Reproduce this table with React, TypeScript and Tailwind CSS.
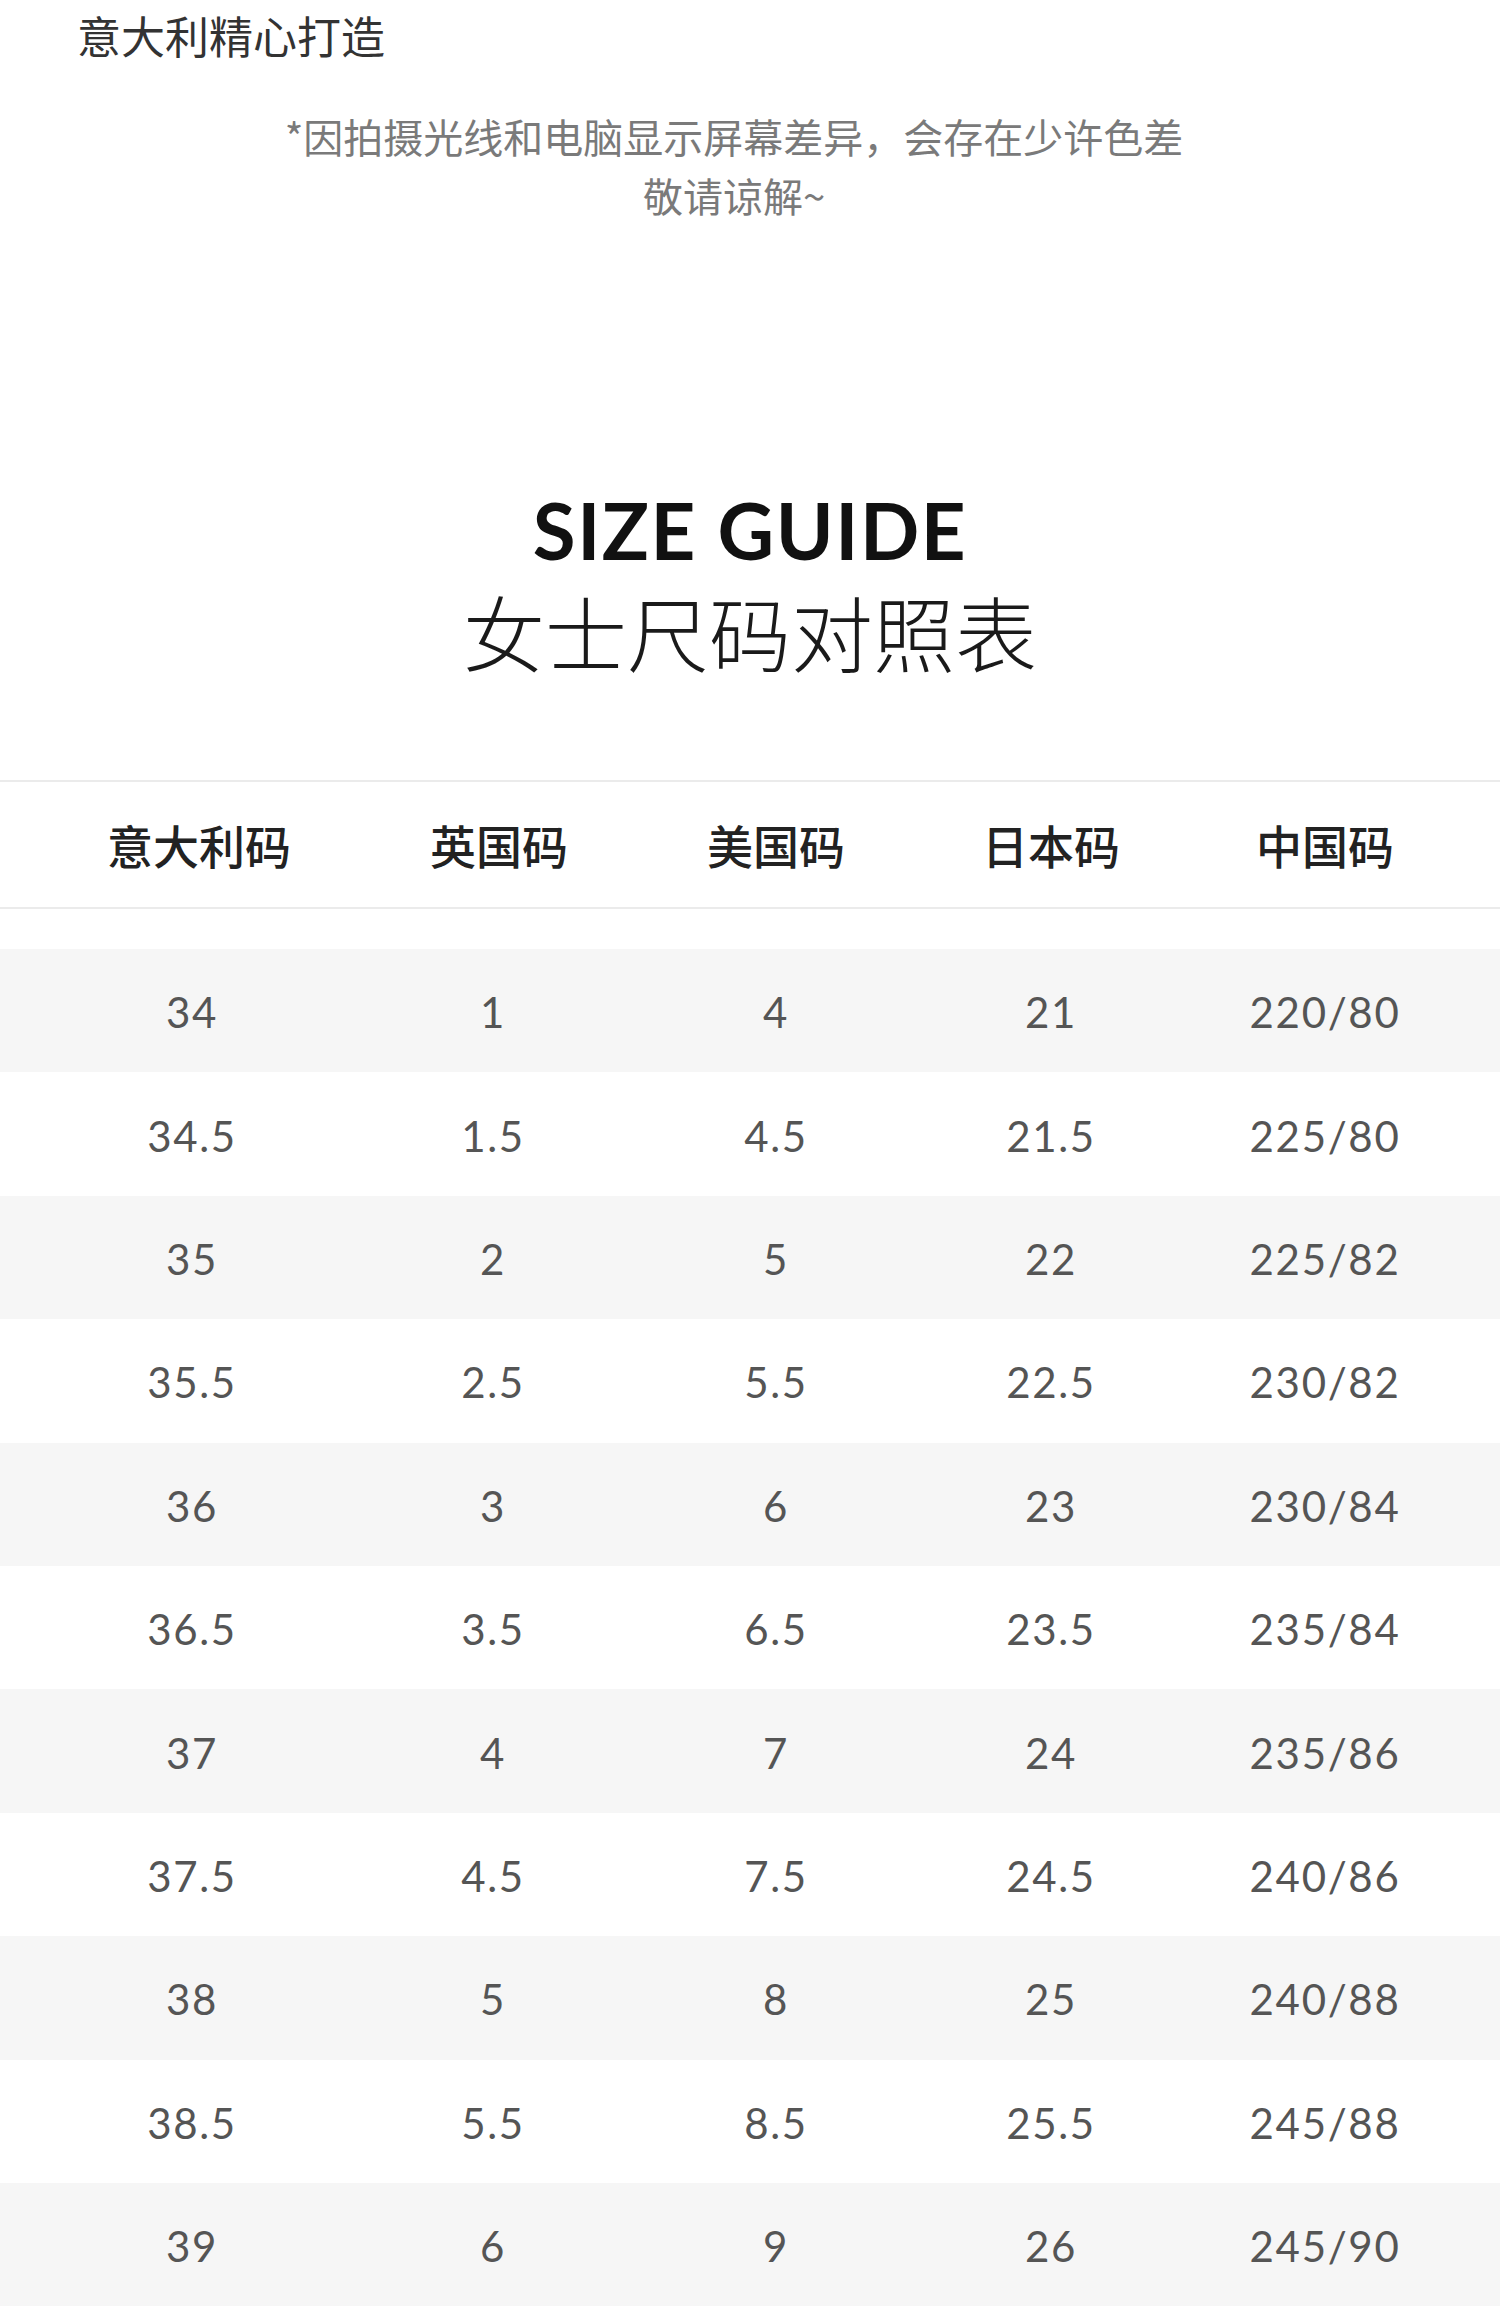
import React from 'react';

type Row = { it: string; uk: string; us: string; jp: string; cn: string };

const rows: Row[] = [
  { it: '34', uk: '1', us: '4', jp: '21', cn: '220/80' },
  { it: '34.5', uk: '1.5', us: '4.5', jp: '21.5', cn: '225/80' },
  { it: '35', uk: '2', us: '5', jp: '22', cn: '225/82' },
  { it: '35.5', uk: '2.5', us: '5.5', jp: '22.5', cn: '230/82' },
  { it: '36', uk: '3', us: '6', jp: '23', cn: '230/84' },
  { it: '36.5', uk: '3.5', us: '6.5', jp: '23.5', cn: '235/84' },
  { it: '37', uk: '4', us: '7', jp: '24', cn: '235/86' },
  { it: '37.5', uk: '4.5', us: '7.5', jp: '24.5', cn: '240/86' },
  { it: '38', uk: '5', us: '8', jp: '25', cn: '240/88' },
  { it: '38.5', uk: '5.5', us: '8.5', jp: '25.5', cn: '245/88' },
  { it: '39', uk: '6', us: '9', jp: '26', cn: '245/90' },
];

// the first two headings sit a little right of their column values
const headers = [
  { label: '意大利码', nudge: 'pl-[14px]' },
  { label: '英国码', nudge: 'pl-[12px]' },
  { label: '美国码', nudge: '' },
  { label: '日本码', nudge: '' },
  { label: '中国码', nudge: '' },
];

const cjk = "font-['Noto_Sans_CJK_SC','Noto_Sans',sans-serif]";
const cols = 'grid grid-cols-[300px_302px_264px_286px_1fr] pl-[42px] pr-[44px]';

export default function App() {
  return (
    <div className={`w-[1500px] min-h-[2322px] bg-white ${cjk}`}>
      <p className="pt-[11px] pl-[77px] text-[44px] leading-[48px] text-[#333]">意大利精心打造</p>

      <div className="mt-[48px] pr-[32px] text-center text-[40px] leading-[59px] text-[#7a7a7a]">
        <p>*因拍摄光线和电脑显示屏幕差异，会存在少许色差</p>
        <p>敬请谅解~</p>
      </div>

      <h1 className="mt-[260px] text-center font-['Lato',sans-serif] text-[78px] font-bold leading-[90px] tracking-[0.02em] text-[#111]">
        SIZE GUIDE
      </h1>
      <h2 className="mt-[8px] text-center text-[82px] font-light leading-[96px] text-[#1a1a1a]">
        女士尺码对照表
      </h2>

      <div className="mt-[101px]">
        <div className={`${cols} h-[129px] items-center border-y-2 border-[#ebebeb]`}>
          {headers.map((h) => (
            <div key={h.label} className={`pb-[1px] text-center text-[46px] font-medium text-[#222] ${h.nudge}`}>
              {h.label}
            </div>
          ))}
        </div>

        <div className="mt-[40px]">
          {rows.map((r, i) => (
            <div
              key={r.it}
              className={`${cols} h-[123.4px] items-center pt-[4px] font-['Lato',sans-serif] text-[42px] tracking-[0.04em] text-[#555] ${
                i % 2 === 0 ? 'bg-[#f6f6f6]' : 'bg-white'
              }`}
            >
              <div className="text-center">{r.it}</div>
              <div className="text-center">{r.uk}</div>
              <div className="text-center">{r.us}</div>
              <div className="text-center">{r.jp}</div>
              <div className="text-center">{r.cn}</div>
            </div>
          ))}
        </div>
      </div>
    </div>
  );
}
